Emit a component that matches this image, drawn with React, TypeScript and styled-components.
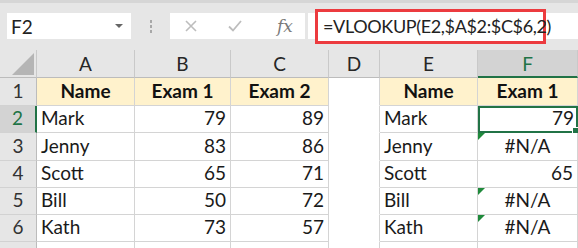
import React from "react";
import styled, { createGlobalStyle, css } from "styled-components";

const GlobalStyle = createGlobalStyle`
  html, body {
    margin: 0;
    padding: 0;
    background: #e6e6e6;
  }
  body {
    font-family: "Lato", "Open Sans", sans-serif;
    overflow: hidden;
  }
`;

const Page = styled.div`
  width: 578px;
  height: 248px;
  overflow: hidden;
  background: #e6e6e6;
`;

const Toolbar = styled.div`
  height: 50px;
  box-sizing: border-box;
  border-top: 3px solid #d6d6d6;
  display: flex;
  align-items: flex-start;
  padding-top: 10px;
`;

const NameBox = styled.div`
  margin-left: 7px;
  width: 124px;
  height: 26px;
  background: #fff;
  display: flex;
  align-items: center;
  justify-content: space-between;
  padding: 0 8px 0 4px;
  box-sizing: border-box;
  font-size: 19px;
  color: #222;
`;

const Caret = styled.span`
  width: 0;
  height: 0;
  border-left: 4px solid transparent;
  border-right: 4px solid transparent;
  border-top: 4px solid #666;
`;

const Dots = styled.div`
  width: 39px;
  height: 26px;
  display: flex;
  flex-direction: column;
  align-items: center;
  justify-content: center;
  gap: 2px;
  span {
    width: 2px;
    height: 3px;
    background: #a8a8a8;
  }
`;

const FxBox = styled.div`
  width: 135px;
  height: 26px;
  background: #fff;
  display: flex;
  align-items: center;
  padding-left: 15px;
  box-sizing: border-box;
  gap: 31px;
`;

const Fx = styled.span`
  font-family: "DejaVu Serif", "Liberation Serif", serif;
  font-style: italic;
  font-size: 17px;
  color: #7a7a7a;
  margin-left: 4px;
`;

const FormulaInput = styled.div`
  flex: 1;
  margin-left: 3px;
  height: 26px;
  background: #fff;
  display: flex;
  align-items: center;
`;

const Highlight = styled.div`
  flex: none;
  margin-left: 7px;
  width: 231px;
  height: 35px;
  box-sizing: border-box;
  border: 3px solid #ec3b3f;
  background: #fff;
  display: flex;
  align-items: center;
  padding-left: 5px;
  font-size: 18px;
  letter-spacing: -0.35px;
  color: #222;
  white-space: nowrap;
`;

const Sheet = styled.div`
  display: grid;
  grid-template-columns: 37px 98px 96px 98px 51px 98px 100px;
  grid-template-rows: 28px 28px 27px 28px 27px 27px 27px 10px;
`;

const ColHead = styled.div<{ $active?: boolean }>`
  box-sizing: border-box;
  border-right: 1px solid #c9c9c9;
  border-bottom: 1px solid #bcbcbc;
  display: flex;
  align-items: center;
  justify-content: center;
  font-size: 19px;
  color: #262626;
  ${(p) =>
    p.$active &&
    css`
      background: #d3d3d3;
      color: #217346;
      border-bottom: 2px solid #217346;
    `}
`;

const Corner = styled.div`
  box-sizing: border-box;
  border-right: 1px solid #c9c9c9;
  border-bottom: 1px solid #bcbcbc;
  display: flex;
  align-items: flex-end;
  justify-content: flex-end;
  padding: 0 2px 2px 0;
  svg {
    display: block;
  }
`;

const RowHead = styled.div<{ $active?: boolean }>`
  box-sizing: border-box;
  border-right: 1px solid #bcbcbc;
  border-bottom: 1px solid #d2d2d2;
  display: flex;
  align-items: flex-end;
  justify-content: center;
  padding-bottom: 3px;
  font-size: 19px;
  color: #333;
  ${(p) =>
    p.$active &&
    css`
      background: #d3d3d3;
      color: #217346;
      border-right: 2px solid #217346;
    `}
`;

type Align = "left" | "right" | "center";

const Cell = styled.div<{
  $align?: Align;
  $head?: boolean;
  $blank?: boolean;
  $flag?: boolean;
  $active?: boolean;
}>`
  position: relative;
  box-sizing: border-box;
  background: #fff;
  border-right: 1px solid #d4d4d4;
  border-bottom: 1px solid #d4d4d4;
  display: flex;
  align-items: flex-end;
  padding: 0 4px 3px 4px;
  font-size: 19px;
  color: #1a1a1a;
  white-space: nowrap;
  justify-content: ${(p) =>
    p.$align === "right" ? "flex-end" : p.$align === "center" ? "center" : "flex-start"};
  ${(p) =>
    p.$head &&
    css`
      background: #fff2cc;
      font-weight: 700;
      color: #111;
    `}
  ${(p) =>
    p.$blank &&
    css`
      border-bottom-color: transparent;
    `}
  ${(p) =>
    p.$flag &&
    css`
      &::before {
        content: "";
        position: absolute;
        left: 0;
        top: 0;
        border-top: 7px solid #1f8a3b;
        border-right: 7px solid transparent;
      }
    `}
  ${(p) =>
    p.$active &&
    css`
      border: 2px solid #217346;
      padding: 0 2px 2px 3px;
      &::after {
        content: "";
        position: absolute;
        right: -3px;
        bottom: -3px;
        width: 5px;
        height: 5px;
        background: #217346;
        border: 1px solid #fff;
      }
    `}
`;

const Spacer = styled.div`
  background: #fff;
  border-right: 1px solid #d4d4d4;
  box-sizing: border-box;
`;

type Row = {
  n: number;
  name: string;
  e1: string;
  e2: string;
  lname: string;
  res: string;
  resAlign: Align;
  flag?: boolean;
};

const rows: Row[] = [
  { n: 2, name: "Mark", e1: "79", e2: "89", lname: "Mark", res: "79", resAlign: "right" },
  { n: 3, name: "Jenny", e1: "83", e2: "86", lname: "Jenny", res: "#N/A", resAlign: "center", flag: true },
  { n: 4, name: "Scott", e1: "65", e2: "71", lname: "Scott", res: "65", resAlign: "right" },
  { n: 5, name: "Bill", e1: "50", e2: "72", lname: "Bill", res: "#N/A", resAlign: "center", flag: true },
  { n: 6, name: "Kath", e1: "73", e2: "57", lname: "Kath", res: "#N/A", resAlign: "center", flag: true },
];

const App = () => {
  return (
    <Page>
      <GlobalStyle />
      <Toolbar>
        <NameBox>
          F2
          <Caret />
        </NameBox>
        <Dots>
          <span />
          <span />
          <span />
        </Dots>
        <FxBox>
          <svg width="12" height="12" viewBox="0 0 12 12">
            <path d="M1 1 L11 11 M11 1 L1 11" stroke="#bdbdbd" strokeWidth="1.6" fill="none" />
          </svg>
          <svg width="14" height="12" viewBox="0 0 14 12">
            <path d="M1 6.5 L5 10.5 L13 1" stroke="#bdbdbd" strokeWidth="1.8" fill="none" />
          </svg>
          <Fx>fx</Fx>
        </FxBox>
        <FormulaInput>
          <Highlight>=VLOOKUP(E2,$A$2:$C$6,2)</Highlight>
        </FormulaInput>
      </Toolbar>

      <Sheet>
        <Corner>
          <svg width="22" height="22" viewBox="0 0 22 22">
            <polygon points="22,0 22,22 0,22" fill="#b5b5b5" />
          </svg>
        </Corner>
        <ColHead>A</ColHead>
        <ColHead>B</ColHead>
        <ColHead>C</ColHead>
        <ColHead>D</ColHead>
        <ColHead>E</ColHead>
        <ColHead $active>F</ColHead>

        <RowHead>1</RowHead>
        <Cell $head $align="center">Name</Cell>
        <Cell $head $align="center">Exam 1</Cell>
        <Cell $head $align="center">Exam 2</Cell>
        <Cell $blank />
        <Cell $head $align="center">Name</Cell>
        <Cell $head $align="center">Exam 1</Cell>

        {rows.map((r) => (
          <React.Fragment key={r.n}>
            <RowHead $active={r.n === 2}>{r.n}</RowHead>
            <Cell>{r.name}</Cell>
            <Cell $align="right">{r.e1}</Cell>
            <Cell $align="right">{r.e2}</Cell>
            <Cell $blank />
            <Cell>{r.lname}</Cell>
            <Cell $align={r.resAlign} $flag={r.flag} $active={r.n === 2}>
              {r.res}
            </Cell>
          </React.Fragment>
        ))}

        <RowHead />
        <Spacer />
        <Spacer />
        <Spacer />
        <Spacer />
        <Spacer />
        <Spacer />
      </Sheet>
    </Page>
  );
};

export default App;
